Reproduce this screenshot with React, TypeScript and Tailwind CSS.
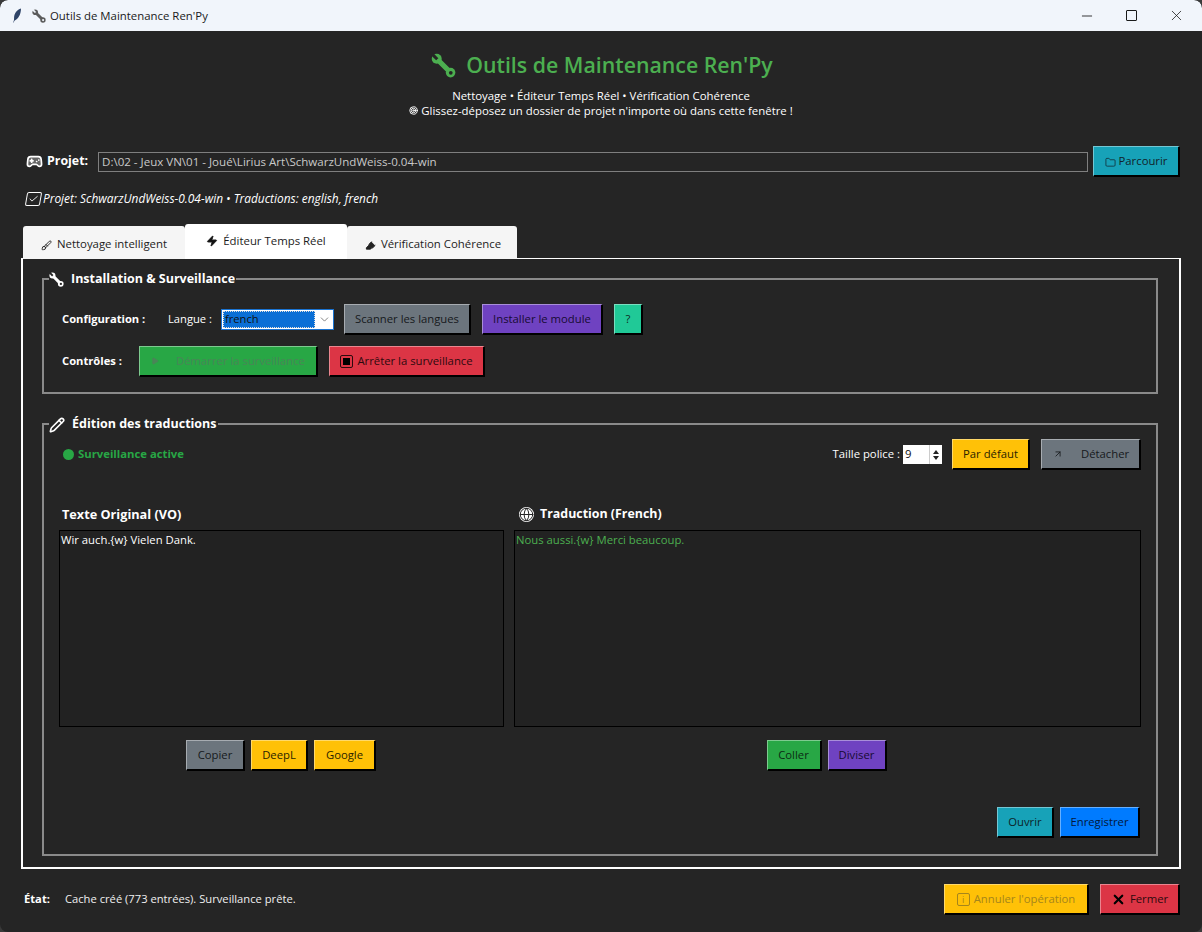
import type { ReactNode } from 'react';
import {
  ArrowUpRight,
  Brush,
  Check,
  ChevronDown,
  Folder,
  Gamepad2,
  Globe,
  Highlighter,
  Minus,
  Pencil,
  Play,
  Target,
  X,
  Zap,
} from 'lucide-react';

// emoji clé plate tel que Windows le dessine : tête ouverte en haut à gauche, anneau en bas à droite
function WrenchIcon({ className, color, hole }: { className: string; color: string; hole: string }) {
  return (
    <svg viewBox="0 0 24 24" className={className} fill="none">
      <path d="M6 6 L18.5 18.5" stroke={color} strokeWidth="5" strokeLinecap="round" />
      <circle cx="5.5" cy="5.5" r="4.8" fill={color} />
      <path d="M1 1 L6 6" stroke={hole} strokeWidth="3" />
      <circle cx="18.8" cy="18.8" r="4.6" fill={color} />
      <circle cx="19" cy="19" r="1.8" fill={hole} />
    </svg>
  );
}

function Btn({ className, children }: { className: string; children: ReactNode }) {
  return (
    <div
      className={`flex h-[31px] shrink-0 items-center justify-center border-t border-l border-b-2 border-r-2 border-t-white/40 border-l-white/40 border-b-black border-r-black text-[11.3px] ${className}`}
    >
      {children}
    </div>
  );
}

function Group({ icon, title, className, children }: { icon: ReactNode; title: string; className: string; children: ReactNode }) {
  return (
    <fieldset className={`ml-[19px] w-[1116px] border-2 border-[#8a8a8a] ${className}`}>
      <legend className="ml-[5px] flex h-[18px] items-center gap-[7px] pr-px pt-px text-[12.5px] font-bold text-white">
        {icon}
        {title}
      </legend>
      {children}
    </fieldset>
  );
}

function Tab({ active, className, icon, label }: { active?: boolean; className: string; icon: ReactNode; label: string }) {
  return (
    <div
      className={`flex items-center justify-center gap-[5px] rounded-t-[3px] text-[11.4px] text-[#1c1c1c] ${active ? 'relative z-10 h-[35px] bg-white pb-px' : 'h-[33px] bg-[#f5f5f5] pt-[3px]'} ${className}`}
    >
      {icon}
      {label}
    </div>
  );
}

export default function App() {
  return (
    <div className="h-[932px] w-[1202px] bg-[#3a3a3a]">
      <div className="h-[932px] w-[1202px] overflow-hidden rounded-lg bg-[#252525] font-['Open_Sans',sans-serif] text-white">
        {/* barre de titre */}
        <div className="flex h-[31px] items-center rounded-t-lg bg-[#f1f5fb] text-[#1a1a1a]">
          <svg viewBox="0 0 10 16" className="ml-[12px] h-[16px] w-[10px]">
            <path d="M9 0.4 C5 1.5 2.4 5 2.1 9 L2 12 L0.8 15.6 L2.7 12.4 C6.4 11 9 6 9 0.4Z" fill="#2f4468" />
          </svg>
          <WrenchIcon className="ml-[10px] h-[14px] w-[14px]" color="#5c5c5c" hole="#f1f5fb" />
          <span className="ml-[4px] text-[11.4px]">Outils de Maintenance Ren'Py</span>
          <div className="ml-auto flex items-center pr-[3px]">
            <div className="flex w-[45px] justify-center">
              <Minus className="h-[16px] w-[16px]" strokeWidth={1.3} />
            </div>
            <div className="flex w-[45px] justify-center">
              <span className="h-[11px] w-[11px] rounded-[1px] border border-[#1a1a1a]" />
            </div>
            <div className="flex w-[45px] justify-center">
              <X className="h-[17px] w-[17px]" strokeWidth={1.1} />
            </div>
          </div>
        </div>

        {/* en-tête */}
        <div className="flex h-[57px] items-end justify-center gap-[10px] pb-[9px] pl-[2px] text-[21.3px] font-semibold leading-[28px] text-[#4caf50]">
          <WrenchIcon className="mb-[1px] h-[25px] w-[25px]" color="#4caf50" hole="#252525" />
          <span>Outils de Maintenance Ren'Py</span>
        </div>
        <p className="text-center text-[11.4px] leading-[15px]">Nettoyage • Éditeur Temps Réel • Vérification Cohérence</p>
        <p className="flex items-center justify-center gap-[3px] text-[11.4px] leading-[15px]">
          <Target className="h-[9px] w-[9px]" strokeWidth={2.5} />
          Glissez-déposez un dossier de projet n'importe où dans cette fenêtre !
        </p>

        {/* projet */}
        <div className="mt-[28px] flex h-[31px] items-center pl-[26px]">
          <Gamepad2 className="h-[17px] w-[17px] fill-white/30" strokeWidth={2.4} />
          <span className="ml-[4px] w-[51px] text-[12.4px] font-bold">Projet:</span>
          <div className="flex h-[20px] w-[990px] items-center border border-[#7f7f7f] pl-[3px] text-[11.55px] text-[#c9c9c9]">
            D:\02 - Jeux VN\01 - Joué\Lirius Art\SchwarzUndWeiss-0.04-win
          </div>
          <Btn className="ml-[5px] w-[87px] gap-[3px] bg-[#17a2b8] text-[#12222a]">
            <Folder className="mt-[2px] h-[11px] w-[11px]" strokeWidth={1.6} />
            Parcourir
          </Btn>
        </div>
        <div className="mt-[12px] flex h-[20px] items-center gap-[2px] pl-[26px] text-[11.9px] italic">
          <Check className="h-[14px] w-[15px] -skew-x-[10deg] rounded-[2px] border border-white p-px" strokeWidth={2} />
          Projet: SchwarzUndWeiss-0.04-win • Traductions: english, french
        </div>

        {/* onglets */}
        <div className="ml-[23px] mt-[15px] flex h-[35px] items-end">
          <Tab className="w-[162px]" icon={<Brush className="mt-[3px] h-[11px] w-[11px]" />} label="Nettoyage intelligent" />
          <Tab active className="w-[162px]" icon={<Zap className="h-[12px] w-[12px] fill-[#111]" />} label="Éditeur Temps Réel" />
          <Tab className="w-[170px] pl-[2px]" icon={<Highlighter className="mt-[3px] h-[11px] w-[11px] fill-[#222]" />} label="Vérification Cohérence" />
        </div>

        {/* panneau */}
        <div className="ml-[21px] -mt-px h-[611px] w-[1160px] border-2 border-t border-white pt-[11px]">
          <Group icon={<WrenchIcon className="h-[15px] w-[15px]" color="#ffffff" hole="#252525" />} title="Installation & Surveillance" className="">
            <div className="pt-[16px] pl-[18px]">
              <div className="flex h-[31px] items-center text-[11.2px]">
                <span className="w-[106px] font-bold">Configuration :</span>
                <span className="w-[53px]">Langue :</span>
                <div className="flex h-[21px] w-[113px] items-center border border-[#1a73d1] bg-white p-px text-[#111]">
                  <div className="flex h-full w-[92px] items-center border border-dotted border-[#ddd] bg-[#0a6fd6] pl-px">french</div>
                  <ChevronDown className="ml-[3px] h-[13px] w-[13px] text-[#444]" strokeWidth={1.2} />
                </div>
                <Btn className="ml-[10px] w-[127px] bg-[#6c757d] text-[#16191c]">Scanner les langues</Btn>
                <Btn className="ml-[11px] w-[121px] bg-[#6f42c1] text-[#170b33]">Installer le module</Btn>
                <Btn className="ml-[11px] w-[29px] bg-[#20c997] text-[#0f2a22]">?</Btn>
              </div>
              <div className="mt-[11px] flex h-[31px] items-center text-[11.2px]">
                <span className="w-[77px] font-bold">Contrôles :</span>
                <Btn className="w-[179px] gap-[17px] bg-[#28a745] text-[#4a8558]">
                  <Play className="h-[8px] w-[8px] fill-[#4a8558]" />
                  Démarrer la surveillance
                </Btn>
                <Btn className="ml-[11px] w-[156px] gap-[4px] bg-[#dc3545] text-[#2c0a0e]">
                  <span className="flex h-[13px] w-[13px] items-center justify-center rounded-[2px] border border-[#2c0a0e]">
                    <span className="h-[7px] w-[7px] bg-black" />
                  </span>
                  Arrêter la surveillance
                </Btn>
              </div>
            </div>
            <div className="h-[15px]" />
          </Group>

          <Group icon={<Pencil className="h-[16px] w-[16px]" strokeWidth={2.4} />} title="Édition des traductions" className="mt-[21px] h-[441px]">
            <div className="px-[15px] pt-[6px]">
              <div className="flex h-[31px] items-center text-[11.3px]">
                <span className="ml-[4px] mr-[4px] h-[11px] w-[11px] rounded-full bg-[#28a745]" />
                <span className="-mt-px font-bold text-[#28a745]">Surveillance active</span>
                <span className="ml-auto mr-[3px]">Taille police :</span>
                <div className="flex h-[19px] w-[39px] items-center justify-between bg-white pl-[2px] text-[#111]">
                  9
                  <div className="flex h-full w-[13px] flex-col items-center justify-center gap-[2px] border-l border-[#ccc]">
                    <span className="h-0 w-0 border-x-[3px] border-b-[4px] border-x-transparent border-b-[#222]" />
                    <span className="h-0 w-0 border-x-[3px] border-t-[4px] border-x-transparent border-t-[#222]" />
                  </div>
                </div>
                <Btn className="ml-[10px] w-[78px] bg-[#ffc107] text-[#2a1f00]">Par défaut</Btn>
                <Btn className="ml-[11px] w-[100px] justify-start bg-[#6c757d] pl-[11px] text-[#16191c]">
                  <ArrowUpRight className="h-[10px] w-[10px]" strokeWidth={2} />
                  <span className="ml-[18px]">Détacher</span>
                </Btn>
              </div>

              <div className="mt-[31px] grid grid-cols-[445px_627px] gap-x-[10px]">
                <div className="flex h-[29px] items-center pb-[2px] pl-[3px] text-[12.7px] font-bold">Texte Original (VO)</div>
                <div className="flex h-[29px] items-center gap-[6px] pb-[2px] pl-[5px] text-[12.4px] font-bold">
                  <div className="flex h-[15px] w-[15px] items-center justify-center rounded-full bg-white">
                    <Globe className="h-[15px] w-[15px] text-[#252525]" strokeWidth={1.6} />
                  </div>
                  Traduction (French)
                </div>
                <div className="h-[197px] border border-black bg-[#222222] pl-[1px] pt-px text-[11.3px] leading-[16px] text-white">Wir auch.{'{w}'} Vielen Dank.</div>
                <div className="h-[197px] border border-black bg-[#222222] pl-[1px] pt-px text-[11.3px] leading-[16px] text-[#4caf50]">Nous aussi.{'{w}'} Merci beaucoup.</div>
                <div className="mt-[13px] flex justify-center gap-[6px] pr-[1px]">
                  <Btn className="w-[59px] bg-[#6c757d] text-[#16191c]">Copier</Btn>
                  <Btn className="w-[57px] bg-[#ffc107] text-[#2a1f00]">DeepL</Btn>
                  <Btn className="w-[62px] bg-[#ffc107] text-[#2a1f00]">Google</Btn>
                </div>
                <div className="mt-[13px] flex justify-center gap-[6px] pr-[2px]">
                  <Btn className="w-[55px] bg-[#28a745] text-[#0b2b14]">Coller</Btn>
                  <Btn className="w-[59px] bg-[#6f42c1] text-[#170b33]">Diviser</Btn>
                </div>
              </div>

              <div className="mt-[36px] flex justify-end gap-[6px] pr-px">
                <Btn className="w-[57px] bg-[#17a2b8] text-[#0d2328]">Ouvrir</Btn>
                <Btn className="w-[80px] bg-[#007bff] text-[#04183a]">Enregistrer</Btn>
              </div>
            </div>
          </Group>
        </div>

        {/* barre d'état */}
        <div className="mt-[15px] flex h-[31px] items-center pl-[24px] pr-[22px] text-[11.2px]">
          <span className="w-[41px] font-bold">État:</span>
          <span className="text-[#f0f0f0]">Cache créé (773 entrées). Surveillance prête.</span>
          <Btn className="ml-auto w-[145px] gap-[4px] bg-[#ffc107] text-[#a5851c]">
            <span className="flex h-[13px] w-[13px] items-center justify-center rounded-[2px] border border-[#a5851c] text-[9px] leading-none">i</span>
            Annuler l'opération
          </Btn>
          <Btn className="ml-[11px] w-[80px] gap-[4px] bg-[#dc3545] text-[#2c0a0e]">
            <X className="h-[15px] w-[15px] text-black" strokeWidth={3.5} />
            Fermer
          </Btn>
        </div>
      </div>
    </div>
  );
}
